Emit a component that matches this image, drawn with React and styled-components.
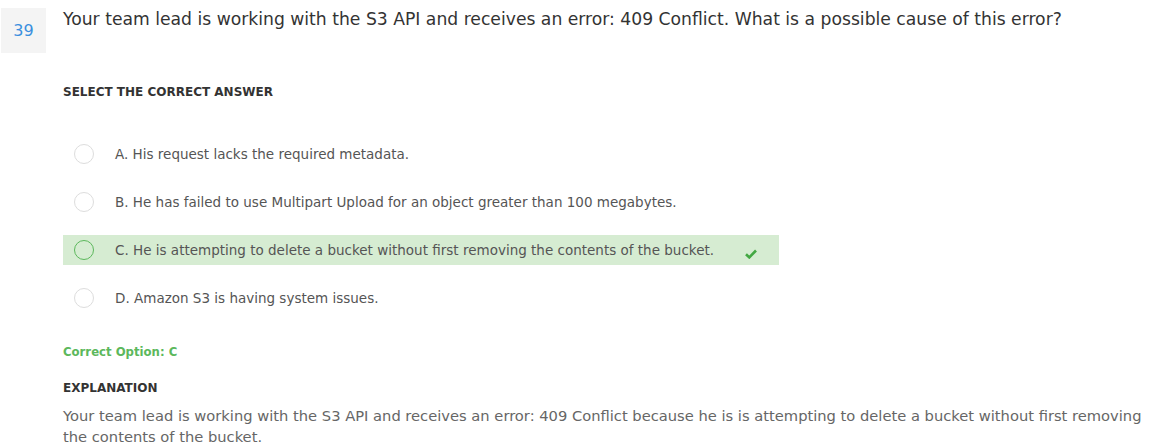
import React from 'react';
import styled, { createGlobalStyle } from 'styled-components';

const Global = createGlobalStyle`
  body {margin: 0; background: #fff; font-family: "DejaVu Sans", "Noto Sans", sans-serif; color: #333;}
  * {box-sizing: border-box;}
`;

const Page = styled.div`
  display: flex;
  align-items: flex-start;
  padding-top: 8px;
  padding-left: 1px;
`;

const Num = styled.div`
  flex: none;
  width: 45px;
  height: 45px;
  background: #f4f4f4;
  color: #3a8fde;
  font-size: 16px;
  display: flex;
  align-items: center;
  justify-content: center;
`;

const Body = styled.div`
  margin-left: 17px;
  flex: 1;
`;

const Question = styled.h1`
  margin: -1px 0 0;
  font-size: 17.2px;
  font-weight: 400;
  line-height: 24px;
  color: #333;
`;

const Label = styled.h2`
  margin: 0;
  font-size: 12px;
  font-weight: 700;
  color: #333;
  margin-top: ${p => p.$top}px;
  line-height: 16px;
`;

const Options = styled.ul`
  list-style: none;
  margin: 39px 0 0;
  padding: 0;
  display: flex;
  flex-direction: column;
  gap: 18px;
`;

const Option = styled.li`
  width: 716px;
  height: 30px;
  display: flex;
  align-items: center;
  padding-left: 11px;
  background: ${p => (p.$correct ? '#d6ecd2' : 'transparent')};
  font-size: 13.5px;
  color: #555;
`;

const Radio = styled.span`
  flex: none;
  width: 20px;
  height: 20px;
  border-radius: 50%;
  border: 1px solid ${p => (p.$correct ? '#5cb85c' : '#ddd')};
  background: ${p => (p.$correct ? 'transparent' : '#fff')};
  margin-right: 21px;
`;

const Check = styled.svg`
  margin-left: 31px;
  margin-top: 7px;
`;

const Correct = styled.div`
  margin-top: 31px;
  font-size: 11.7px;
  font-weight: 700;
  color: #5cb85c;
  line-height: 16px;
`;

const Explain = styled.p`
  margin: 9px 0 0;
  font-size: 14.7px;
  line-height: 21px;
  color: #666;
`;

const options = [
  {id: 'A', text: 'His request lacks the required metadata.'},
  {id: 'B', text: 'He has failed to use Multipart Upload for an object greater than 100 megabytes.'},
  {id: 'C', text: 'He is attempting to delete a bucket without first removing the contents of the bucket.', correct: true},
  {id: 'D', text: 'Amazon S3 is having system issues.'}
];

export default function App() {
  return (
    <>
      <Global/>
      <Page>
        <Num>39</Num>
        <Body>
          <Question>Your team lead is working with the S3 API and receives an error: 409 Conflict. What is a possible cause of this error?</Question>
          <Label $top={53}>SELECT THE CORRECT ANSWER</Label>
          <Options>
            {options.map(o =>
              <Option key={o.id} $correct={o.correct}>
                <Radio $correct={o.correct}/>
                <span>{o.id}. {o.text}</span>
                {o.correct &&
                  <Check width="12" height="10" viewBox="0 0 12 10">
                    <path d="M1 5.2l3.3 3.2L11 1.5" fill="none" stroke="#43a843" strokeWidth="2.6"/>
                  </Check>
                }
              </Option>
            )}
          </Options>
          <Correct>Correct Option: C</Correct>
          <Label $top={20}>EXPLANATION</Label>
          <Explain>Your team lead is working with the S3 API and receives an error: 409 Conflict because he is is attempting to delete a bucket without first removing the contents of the bucket.</Explain>
        </Body>
      </Page>
    </>
  );
}
